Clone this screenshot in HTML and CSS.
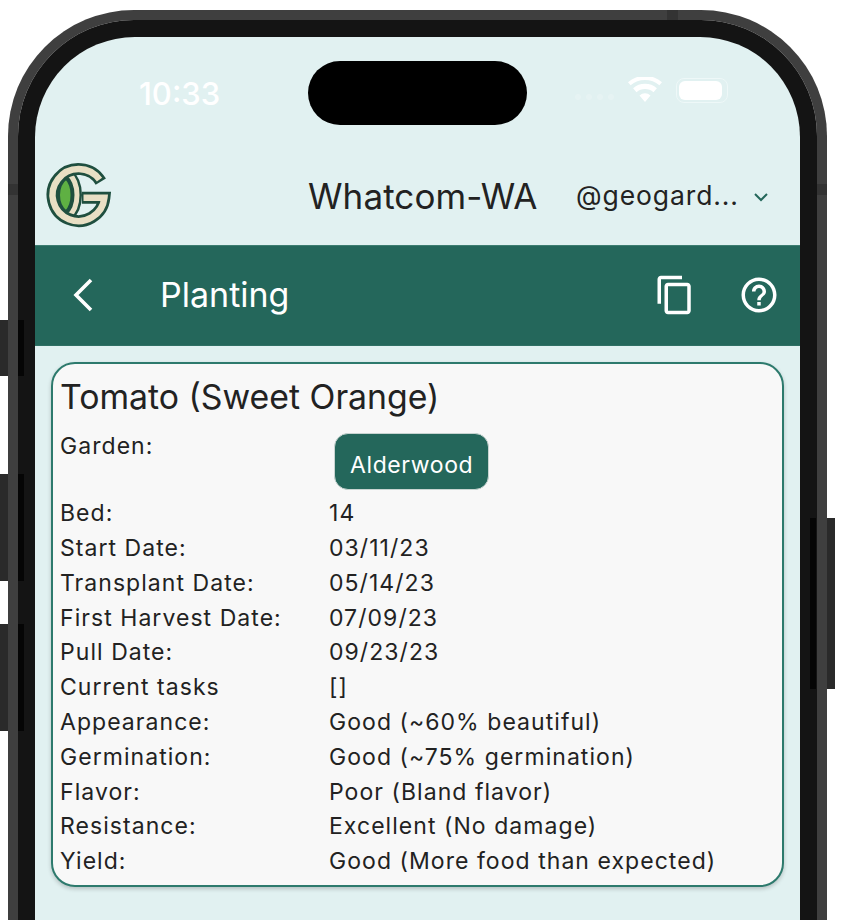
FILE: index.html
```html
<!doctype html>
<html>
<head>
<meta charset="utf-8">
<title>Planting</title>
<link rel="stylesheet" href="styles.css">
</head>

<body>
<div class="phone">
	<span class="key key-a"></span>
	<span class="key key-b"></span>
	<span class="key key-c"></span>
	<span class="key key-d"></span>
	<span class="band band-l"></span>
	<span class="band band-r"></span>
	<span class="band band-t"></span>
	<div class="bezel">
		<span class="shade shade-a"></span>
		<span class="shade shade-b"></span>
		<span class="shade shade-c"></span>
		<span class="shade shade-d"></span>
		<div class="screen">
			<div class="island"></div>

			<div class="status">
				<span class="time">10:33</span>
				<div class="status-icons">
					<div class="dots"><i></i><i></i><i></i><i></i></div>
					<svg class="wifi" width="34" height="26" viewBox="0 0 34 26">
						<path d="M17 25l-5.500-6.500a8 8 0 0 1 11 0zM8.500 15.200l-3.400-4a18 18 0 0 1 23.800 0l-3.400 4a12.800 12.800 0 0 0-17 0zM2.600 8.300L0 5.200a26 26 0 0 1 34 0l-2.600 3.100a22 22 0 0 0-28.800 0z" fill="#fff"/>
					</svg>
					<div class="battery"><div class="battery-fill"></div></div>
				</div>
			</div>

			<div class="topbar">
				<svg class="logo" width="66" height="68" viewBox="0 0 66 68">
					<path d="M20 17C10 25 10 43 20 51 28 43 28 25 20 17z" fill="#5fb043" stroke="#1f4f3f" stroke-width="3"/>
					<path d="M22 12C34 22 34 46 22 56" fill="none" stroke="#1f4f3f" stroke-width="10"/>
					<path d="M22 12C34 22 34 46 22 56" fill="none" stroke="#e8dfc4" stroke-width="5"/>
					<path d="M54.800 20.600A26 26 0 1 0 58.400 36.700H36" fill="none" stroke="#1f4f3f" stroke-width="12"/>
					<path d="M53.500 18.700A26 26 0 1 0 58.400 36.700H37.500" fill="none" stroke="#e8dfc4" stroke-width="6.500"/>
				</svg>
				<div class="county">Whatcom-WA</div>
				<div class="account">@geogard...</div>
				<svg class="caret" width="16" height="10" viewBox="0 0 16 10">
					<path d="M2 2l6 6 6-6" fill="none" stroke="#24675b" stroke-width="2"/>
				</svg>
			</div>

			<div class="navbar">
				<svg class="back" width="24" height="36" viewBox="0 0 24 36">
					<path d="M20 3L5 18l15 15" fill="none" stroke="#fff" stroke-width="3.600"/>
				</svg>
				<div class="nav-title">Planting</div>
				<svg class="nav-icon copy" width="42" height="42" viewBox="0 0 24 24">
					<path d="M16 1H4c-1.100 0-2 .9-2 2v14h2V3h12V1zm3 4H8c-1.100 0-2 .9-2 2v14c0 1.100.9 2 2 2h11c1.100 0 2-.9 2-2V7c0-1.100-.9-2-2-2zm0 16H8V7h11v14z" fill="#fff"/>
				</svg>
				<svg class="nav-icon" width="42" height="42" viewBox="0 0 24 24">
					<path d="M11 18h2v-2h-2v2zm1-16C6.480 2 2 6.480 2 12s4.480 10 10 10 10-4.480 10-10S17.520 2 12 2zm0 18c-4.410 0-8-3.590-8-8s3.590-8 8-8 8 3.590 8 8-3.590 8-8 8zm0-14c-2.210 0-4 1.790-4 4h2c0-1.100.9-2 2-2s2 .9 2 2c0 2-3 1.750-3 5h2c0-2.250 3-2.500 3-5 0-2.210-1.790-4-4-4z" fill="#fff"/>
				</svg>
			</div>

			<div class="card">
				<h1>Tomato (Sweet Orange)</h1>
				<div class="details">
					<div class="label">Garden:</div>
					<div class="value"><span class="chip">Alderwood</span></div>
					<div class="label">Bed:</div><div class="value">14</div>
					<div class="label">Start Date:</div><div class="value">03/11/23</div>
					<div class="label">Transplant Date:</div><div class="value">05/14/23</div>
					<div class="label">First Harvest Date:</div><div class="value">07/09/23</div>
					<div class="label">Pull Date:</div><div class="value">09/23/23</div>
					<div class="label">Current tasks</div><div class="value">[]</div>
					<div class="label">Appearance:</div><div class="value">Good (~60% beautiful)</div>
					<div class="label">Germination:</div><div class="value">Good (~75% germination)</div>
					<div class="label">Flavor:</div><div class="value">Poor (Bland flavor)</div>
					<div class="label">Resistance:</div><div class="value">Excellent (No damage)</div>
					<div class="label">Yield:</div><div class="value">Good (More food than expected)</div>
				</div>
			</div>
		</div>
	</div>
</div>
</body>
</html>
```

FILE: styles.css
```css
*{ margin:0; padding:0; box-sizing:border-box;}
html,body{ height:920px; overflow:hidden;}
body{ background:#fff; font-family:Inter,"Liberation Sans",sans-serif; color:#222;}

/* device frame, cut off by the bottom of the window */
.phone{ width:819px; height:910px; margin:10px 0 0 8px; border:10px solid #3f3f3f; border-bottom:0; border-radius:126px 126px 0 0; position:relative;}
.bezel{ height:100%; border:17px solid #141414; border-bottom:0; border-radius:116px 116px 0 0; background:#141414; position:relative;}
.screen{ height:100%; background:#e1f1f1; border-radius:100px 100px 0 0; overflow:hidden; position:relative;}

.key{ position:absolute; width:8px; background:#2a2a2a;}
.key-a{ left:-18px; top:300px; height:56px;}
.key-b{ left:-18px; top:454px; height:107px;}
.key-c{ left:-18px; top:604px; height:107px;}
.key-d{ right:-18px; top:498px; height:171px;}

.band{ position:absolute; background:#333;}
.band-l{ left:-10px; top:164px; width:10px; height:11px;}
.band-r{ right:-10px; top:164px; width:10px; height:11px;}
.band-t{ left:649px; top:-10px; width:11px; height:10px;}

.shade{ position:absolute; width:6px; background:#050505;}
.shade-a{ left:-17px; top:283px; height:56px;}
.shade-b{ left:-17px; top:437px; height:107px;}
.shade-c{ left:-17px; top:587px; height:107px;}
.shade-d{ right:-16px; top:481px; height:171px;}

.island{ position:absolute; left:273px; top:24px; width:219px; height:64px; background:#000; border-radius:32px;}

/* status bar */
.status{ height:112px; padding:38px 72px 0 104px; display:flex; justify-content:space-between; align-items:flex-start;}
.time{ font-size:31px; line-height:38px; font-weight:500; color:#fff;}
.status-icons{ display:flex; align-items:center; gap:14px; margin-top:2px;}
.dots{ display:flex; gap:5px; margin-top:14px;}
.dots i{ width:6px; height:6px; border-radius:50%; background:#e6f3f3; display:block;}
.battery{ width:52px; height:25px; padding:2px; border:1px solid #eef8f8; border-radius:8px;}
.battery-fill{ height:100%; width:43px; background:#fff; border-radius:6px;}

/* top bar */
.topbar{ height:96px; padding:12px 0 0 11px; display:flex; align-items:flex-start;}
.logo{ margin-right:196px;}
.county{ width:268px; font-size:35px; line-height:70px; letter-spacing:.1px; white-space:nowrap;}
.account{ width:177px; font-size:26.500px; line-height:68px; letter-spacing:.9px; white-space:nowrap;}
.caret{ margin:31px 0 0 0;}

.navbar{ height:101px; background:#24675b; border-top:1px solid #3d7d71; border-bottom:1px solid #2f7064; padding:0 20px 2px 36px; display:flex; align-items:center; color:#fff;}
.back{ margin-right:65px;}
.nav-title{ font-size:34px;}
.nav-icon{ display:block;}
.copy{ margin-left:auto; margin-right:42px;}

/* card */
.card{ margin:16px 16px 0; height:525px; padding:12px 7px 0; background:#f8f8f8; border:2px solid #2d7a6d; border-radius:24px; box-shadow:0 2px 4px rgba(0,0,0,.2);}
.card h1{ font-size:33.800px; line-height:42px; font-weight:400; margin-bottom:11px;}
.details{ display:grid; grid-template-columns:269px 1fr; grid-template-rows:67.300px repeat(11,34.800px); font-size:23px; line-height:34px; letter-spacing:1.050px;}
.chip{ display:inline-block; margin:4px 0 0 5px; height:57px; padding:0 15px; line-height:62px; letter-spacing:.6px; background:#24675b; color:#fff; border:1px solid #c8d4d1; border-radius:14px;}
```
